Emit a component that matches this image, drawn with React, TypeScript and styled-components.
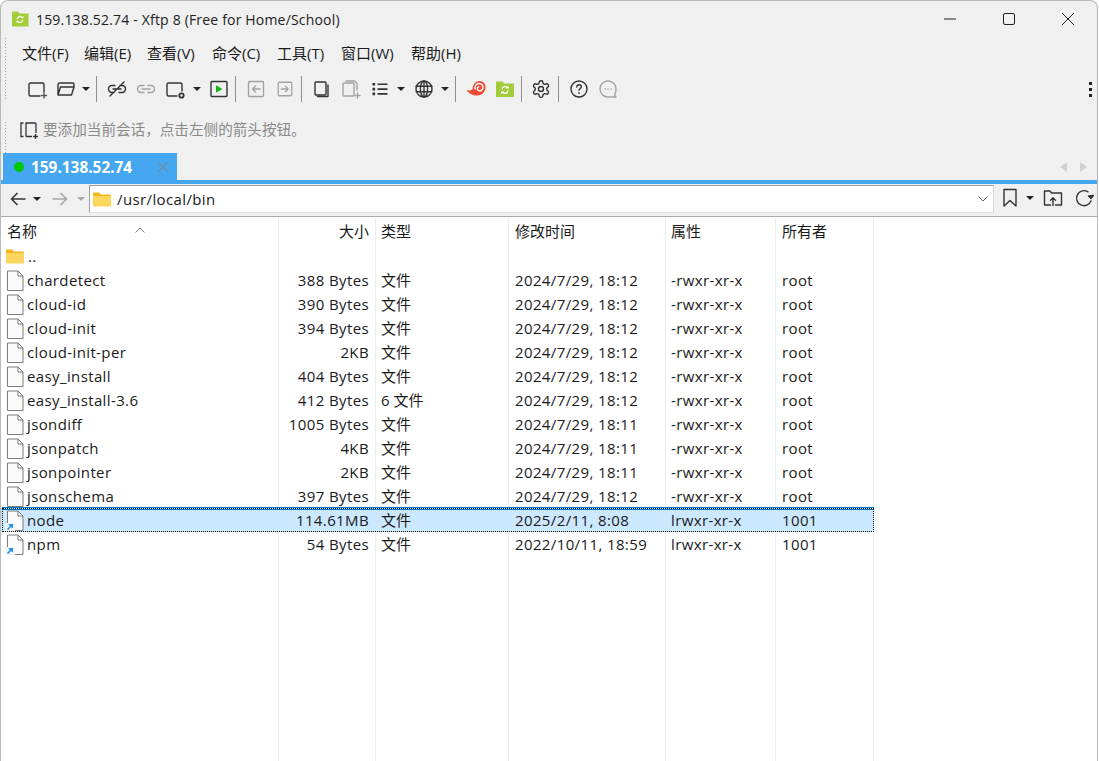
import React from "react";
import styled, { createGlobalStyle } from "styled-components";

const Global = createGlobalStyle`
  html, body { margin: 0; padding: 0; background: #fff; }
  body { width: 1099px; height: 761px; overflow: hidden; font-family: "Open Sans", "Noto Sans CJK SC", sans-serif; font-size: 15px; color: #1a1a1a; }
  * { box-sizing: border-box; }
`;

const Window = styled.div`
  width: 1098px; height: 761px; border: 1px solid #b9b9b9; border-bottom: none; border-radius: 8px 8px 0 0;
  overflow: hidden; display: flex; flex-direction: column; background: #f0f0f0;
`;
const TitleBar = styled.div`
  height: 36px; flex: none; display: flex; align-items: center; padding-left: 10px;
`;
const TitleText = styled.div`
  margin-left: 7px; font-size: 14px; letter-spacing: 0.18px; color: #222; white-space: nowrap; flex: 1;
`;
const WinButton = styled.div`
  width: 59px; height: 36px; display: flex; align-items: center; justify-content: center;
`;
const WinButtons = styled.div`
  display: flex;
`;
const Bars = styled.div`
  height: 116px; flex: none; padding-left: 21px; position: relative;
  background-image: radial-gradient(circle, #a9a9a9 0.9px, transparent 1px);
  background-size: 3px 3px; background-repeat: repeat-y; background-position: 3px 0;
`;
const GripGap = styled.div`
  position: absolute; left: 0; width: 18px; top: 63px; height: 20px; background: #f0f0f0;
`;
const Menu = styled.div`
  height: 34px; display: flex; align-items: center;
`;
const MenuItem = styled.div<{ $w: number }>`
  width: ${(p) => p.$w}px; font-size: 15px; white-space: nowrap; color: #1a1a1a; padding-bottom: 3px;
`;
const Toolbar = styled.div`
  height: 36px; display: flex; align-items: center; position: relative;
`;
const Tool = styled.div<{ $w: number }>`
  width: ${(p) => p.$w}px; height: 28px; flex: none; display: flex; align-items: center; justify-content: center;
`;
const Caret = styled.div<{ $muted?: boolean }>`
  width: 0; height: 0; border-left: 4px solid transparent; border-right: 4px solid transparent;
  border-top: 4px solid ${(p) => (p.$muted ? "#a6a6a6" : "#222")};
`;
const Separator = styled.div`
  width: 1px; height: 26px; background: #8f8f8f;
`;
const MoreDots = styled.div`
  position: absolute; right: 5px; top: 11px; display: flex; flex-direction: column; gap: 3px;
`;
const Dot = styled.span`
  width: 3px; height: 3px; background: #222; display: block;
`;
const Hint = styled.div`
  height: 46px; margin-left: -3px; display: flex; align-items: center; gap: 4px; color: #8a8a8a; font-size: 14.6px;
`;
const HintText = styled.span`
  padding-bottom: 3px;
`;
const TabRow = styled.div`
  height: 27px; flex: none; display: flex; padding-left: 2px; align-items: stretch;
`;
const Tab = styled.div`
  width: 174px; background: #45a7ef; display: flex; align-items: center; padding-left: 11px; color: #fff; font-weight: 700; font-size: 15.4px;
`;
const GreenDot = styled.span`
  width: 10px; height: 10px; border-radius: 50%; background: #00c800; margin-right: 7px;
`;
const TabLabel = styled.span`
  flex: 1; padding-top: 1px;
`;
const TabClose = styled.div`
  width: 28px; display: flex; justify-content: center;
`;
const TabNav = styled.div`
  margin-left: auto; display: flex; gap: 13px; align-items: center; padding-right: 10px;
`;
const Arrow = styled.div<{ $left?: boolean }>`
  width: 0; height: 0; border-top: 5px solid transparent; border-bottom: 5px solid transparent;
  ${(p) => (p.$left ? "border-right: 7px solid #d0d0d0;" : "border-left: 7px solid #d0d0d0;")}
`;
const BlueBar = styled.div`
  height: 4px; flex: none; background: #45a7ef;
`;
const AddressBar = styled.div`
  height: 33px; flex: none; display: flex; align-items: flex-start; border-bottom: 1px solid #a9a9a9;
`;
const NavGroup = styled.div`
  width: 88px; height: 29px; display: flex; align-items: center; flex: none; padding-left: 4px;
`;
const AddressInput = styled.div`
  width: 905px; height: 28px; margin-top: 1px; flex: none; background: #fff; border: 1px solid #a0a0a0; border-right-color: #d8d8d8; border-bottom-color: #e0e0e0;
  display: flex; align-items: center; padding-left: 3px; font-size: 15px; letter-spacing: 0.38px;
`;
const Path = styled.span`
  margin-left: 6px; flex: 1;
`;
const DropChevron = styled.div`
  width: 20px; display: flex; justify-content: center;
`;
const AddressTools = styled.div`
  display: flex; align-items: center; height: 28px;
`;
const List = styled.div`
  flex: 1; background: #fff; display: flex; flex-direction: column; padding-top: 1px; position: relative; min-height: 0;
`;
const COLS = "278px 97px 133px 157px 110px 98px 1fr";
const Header = styled.div`
  display: grid; grid-template-columns: ${COLS}; height: 26px; flex: none;
`;
const HeadCell = styled.div<{ $right?: boolean; $pad?: number }>`
  padding: 0 6px 2px ${(p) => p.$pad ?? 6}px; display: flex; align-items: center;
  justify-content: ${(p) => (p.$right ? "flex-end" : "flex-start")};
  border-right: 1px solid #e6eef6; font-size: 15px; color: #1a1a1a;
`;
const SortMark = styled.div`
  position: absolute; left: 134px; top: 0px;
`;
const Rows = styled.div`
  flex: 1; display: flex; flex-direction: column;
`;
const Row = styled.div`
  display: grid; grid-template-columns: ${COLS}; height: 24px; flex: none; position: relative;
`;
const FillRow = styled(Row)`
  flex: 1; height: auto;
`;
const Cell = styled.div<{ $right?: boolean; $pad?: number; $selected?: boolean }>`
  padding: 0 6px 0 ${(p) => p.$pad ?? 6}px; display: flex; align-items: center; white-space: nowrap; font-size: 15px; letter-spacing: 0.38px; color: #1a1a1a;
  justify-content: ${(p) => (p.$right ? "flex-end" : "flex-start")};
  border-right: 1px solid ${(p) => (p.$selected ? "transparent" : "#e6eef6")};
  background: ${(p) => (p.$selected ? "#cce8ff" : "transparent")};
`;
const TypeCell = styled(Cell)`
  padding-left: 5px; padding-bottom: 1px; letter-spacing: 0;
`;
const NameCell = styled(Cell)`
  padding-left: 4px; gap: 3px;
`;
const ParentCell = styled(Cell)`
  padding-left: 5px; gap: 4px;
`;
const SelectionFrame = styled.div`
  position: absolute; left: 1px; top: 0; width: 872px; height: 24px; border: 1px dotted #111; box-shadow: inset 0 1px 0 #0a78c8, 0 -1px 0 #0a78c8; pointer-events: none;
`;

const S = { fill: "none", stroke: "#333", strokeWidth: 1.4, strokeLinecap: "round", strokeLinejoin: "round" } as const;
const G = { ...S, stroke: "#a2a2a2" };

const I = {
  newSession: (
    <svg width="22" height="22" viewBox="0 0 22 22"><path {...S} d="M14 18H4.500A1.500 1.500 0 0 1 3 16.500V6.500A1.500 1.500 0 0 1 4.500 5h12A1.500 1.500 0 0 1 18 6.500V14" /><path {...S} stroke="#555" d="M18 15v5M15.500 17.500h5" /></svg>
  ),
  open: (
    <svg width="22" height="22" viewBox="0 0 22 22"><path {...S} d="M3 17V6.500A1.500 1.500 0 0 1 4.500 5h13A1.500 1.500 0 0 1 19 6.500V9H5.500L3 17h13.500L19 9" /></svg>
  ),
  broken: (
    <svg width="22" height="22" viewBox="0 0 22 22"><path {...S} d="M9 7.500H6a3.500 3.500 0 0 0 0 7h2M13 14.500h3a3.500 3.500 0 0 0 0-7h-2M7 11h8M4 18 18 4" /></svg>
  ),
  link: (
    <svg width="22" height="22" viewBox="0 0 22 22"><path {...G} d="M9 7.500H6a3.500 3.500 0 0 0 0 7h3M13 7.500h3a3.500 3.500 0 0 1 0 7h-3M7 11h8" /></svg>
  ),
  gearSession: (
    <svg width="22" height="22" viewBox="0 0 22 22"><path {...S} d="M13 18H4.500A1.500 1.500 0 0 1 3 16.500V6.500A1.500 1.500 0 0 1 4.500 5h12A1.500 1.500 0 0 1 18 6.500V13" /><circle cx="17.500" cy="17.500" r="2.200" fill="none" stroke="#333" strokeWidth="1.800" /></svg>
  ),
  play: (
    <svg width="20" height="20" viewBox="0 0 20 20"><rect {...S} x="2" y="2.500" width="16" height="15" rx="1" /><path d="M7 6.300v7.400l6.500-3.700z" fill="#12b312" /></svg>
  ),
  left: (
    <svg width="20" height="20" viewBox="0 0 20 20"><rect {...G} x="2.500" y="2.500" width="15" height="15" rx="1" /><path {...G} d="M14 10H6.500M9.500 7 6.500 10l3 3" /></svg>
  ),
  right: (
    <svg width="20" height="20" viewBox="0 0 20 20"><rect {...G} x="2.500" y="2.500" width="15" height="15" rx="1" /><path {...G} d="M6 10h7.500M10.500 7l3 3-3 3" /></svg>
  ),
  copy: (
    <svg width="20" height="20" viewBox="0 0 20 20"><rect {...S} x="4" y="3" width="11" height="13" rx="1" /><path {...S} d="M17 6v11.500H6.500" /></svg>
  ),
  paste: (
    <svg width="22" height="22" viewBox="0 0 22 22"><rect {...G} x="3" y="5" width="11" height="13" rx="1" /><path {...G} d="M6 3h8.500L17 5.500V12M17.500 15v5M15 17.500h5" /></svg>
  ),
  list: (
    <svg width="20" height="20" viewBox="0 0 20 20"><path d="M2.500 4h2.600v2.600H2.500zM2.500 8.800h2.600v2.600H2.500zM2.500 13.600h2.600v2.600H2.500z" fill="#333" /><path {...S} strokeLinecap="butt" strokeWidth="1.600" d="M7.500 5.300h10M7.500 10.100h10M7.500 14.900h10" /></svg>
  ),
  globe: (
    <svg width="20" height="20" viewBox="0 0 20 20"><circle {...S} cx="10" cy="10" r="8" /><ellipse {...S} cx="10" cy="10" rx="3.600" ry="8" /><path {...S} d="M10 2v16M2.200 7.300h15.600M2.200 12.700h15.600" /></svg>
  ),
  snail: (
    <svg width="22" height="22" viewBox="0 0 22 22"><path fill="#ee4b35" d="M1.500 12c3 .8 5 .5 6-1 .2-4 2.800-8 7-8 4 0 6.500 3.200 6 7-.5 4.500-4 7.500-8.500 7.500-4.200 0-8.500-2-10.500-5.500z" /><path fill="none" stroke="#fff" strokeWidth="1.400" d="M10 11.500c-.5-3.500 1.500-6 4.200-6 2.500 0 4.100 2 3.700 4.300-.3 2-2 3.300-3.600 3-1.400-.3-2.200-1.500-1.900-2.700.2-.9 1.100-1.500 1.900-1.200" /></svg>
  ),
  xftp: (
    <svg width="20" height="20" viewBox="0 0 20 20"><path fill="#a2cc3a" d="M1 2.500h6.500l1.500 2h10v13.500H1z" /><path fill="none" stroke="#fff" strokeWidth="1.400" d="M7 10.500a3 3 0 0 1 5.500-1.700M13 11.500a3 3 0 0 1-5.500 1.500" /><path fill="#fff" d="M10.800 9.500h3.200V7zM9.200 12.500H6V15z" /></svg>
  ),
  gear: (
    <svg width="20" height="20" viewBox="0 0 24 24"><path {...S} strokeWidth="1.700" d="M12.220 2h-.44a2 2 0 0 0-2 2v.18a2 2 0 0 1-1 1.730l-.43.250a2 2 0 0 1-2 0l-.15-.08a2 2 0 0 0-2.730.73l-.22.380a2 2 0 0 0 .73 2.730l.15.100a2 2 0 0 1 1 1.720v.510a2 2 0 0 1-1 1.740l-.15.090a2 2 0 0 0-.73 2.730l.22.380a2 2 0 0 0 2.730.73l.15-.08a2 2 0 0 1 2 0l.43.250a2 2 0 0 1 1 1.730V20a2 2 0 0 0 2 2h.44a2 2 0 0 0 2-2v-.18a2 2 0 0 1 1-1.730l.43-.250a2 2 0 0 1 2 0l.15.080a2 2 0 0 0 2.730-.73l.22-.390a2 2 0 0 0-.73-2.730l-.15-.080a2 2 0 0 1-1-1.740v-.500a2 2 0 0 1 1-1.740l.15-.090a2 2 0 0 0 .73-2.730l-.22-.380a2 2 0 0 0-2.730-.73l-.15.080a2 2 0 0 1-2 0l-.43-.250a2 2 0 0 1-1-1.730V4a2 2 0 0 0-2-2z" /><circle {...S} strokeWidth="1.700" cx="12" cy="12" r="3" /></svg>
  ),
  help: (
    <svg width="20" height="20" viewBox="0 0 20 20"><circle {...S} cx="10" cy="10" r="8" /><path {...S} d="M7.800 8c0-1.300 1-2.200 2.300-2.200s2.200.9 2.200 2c0 1.700-2.300 1.700-2.300 3.500" /><path d="M9.200 13.200h1.600v1.600H9.200z" fill="#333" /></svg>
  ),
  chat: (
    <svg width="20" height="20" viewBox="0 0 20 20"><path {...G} d="M18 10a8 8 0 1 0-8 8h8l-1.500-2.500A8 8 0 0 0 18 10z" /><path {...G} d="M7 10h.1M10 10h.1M13 10h.1" /></svg>
  ),
  back: (color: string) => (
    <svg width="18" height="18" viewBox="0 0 18 18"><path fill="none" stroke={color} strokeWidth="1.500" d="M16.500 9H2.500M8.500 3 2.500 9l6 6" /></svg>
  ),
  forward: (color: string) => (
    <svg width="18" height="18" viewBox="0 0 18 18"><path fill="none" stroke={color} strokeWidth="1.500" d="M1.500 9h14M9.500 3l6 6-6 6" /></svg>
  ),
  bookmark: (
    <svg width="18" height="20" viewBox="0 0 18 20"><path {...S} d="M3 1.500h12v16.500l-6-5.500-6 5.500z" /></svg>
  ),
  up: (
    <svg width="20" height="20" viewBox="0 0 20 20"><path {...S} d="M7.500 17H1.500V3h5.500l1.500 2h10v12H12.500M10 17.500V10M7.500 12.200 10 9.700l2.500 2.500" /></svg>
  ),
  refresh: (
    <svg width="20" height="20" viewBox="0 0 20 20"><path {...S} d="M14 3.800A7.500 7.500 0 1 0 17 13" /><path {...S} fill="#333" d="M14.500 8 17 10.500 19.500 7.500z" /></svg>
  ),
};

const FolderIcon = () => (
  <svg width="18" height="15" viewBox="0 0 18 15"><path fill="#f4b61a" d="M0 1.500A1 1 0 0 1 1 .5h5l2 2h9a1 1 0 0 1 1 1V5H0z" /><path fill="#fbd75f" d="M0 4h18v9.500a1 1 0 0 1-1 1H1a1 1 0 0 1-1-1z" /></svg>
);
const FileIcon = ({ link }: { link?: boolean }) => (
  <svg width="19" height="21" viewBox="0 0 19 21">
    <path fill="#fafafa" stroke="#7d7d7d" d="M2.500 1h10.500l5 5v14.500H2.500z" />
    <path fill="none" stroke="#7d7d7d" d="M13 1v5h5" />
    {link && <rect x="0" y="13" width="10" height="8" fill="#eef5fb" />}
    {link && <path fill="none" stroke="#1d8ee6" strokeWidth="1.500" d="M2.500 19.500 7 15M3.800 14.800h3.400V18" />}
  </svg>
);

const TitleIcon = () => (
  <svg width="18" height="18" viewBox="0 0 18 18"><path fill="#a2cc3a" d="M1 1.500h6l1.500 2H17.500v13H1z" /><path fill="none" stroke="#fff" strokeWidth="1.200" d="M6.300 9a2.700 2.700 0 0 1 5-1.200M11.700 10a2.700 2.700 0 0 1-5 1.200" /><path fill="#fff" d="M9.800 8.300h2.700V6zM8.200 10.700H5.500V13z" /></svg>
);

type FileRow = { name: string; size: string; type: string; date: string; attr: string; owner: string; link?: boolean; selected?: boolean };
const d12 = "2024/7/29, 18:12";
const d11 = "2024/7/29, 18:11";
const p = "-rwxr-xr-x";
const l = "lrwxr-xr-x";
const files: FileRow[] = [
  { name: "chardetect", size: "388 Bytes", type: "文件", date: d12, attr: p, owner: "root" },
  { name: "cloud-id", size: "390 Bytes", type: "文件", date: d12, attr: p, owner: "root" },
  { name: "cloud-init", size: "394 Bytes", type: "文件", date: d12, attr: p, owner: "root" },
  { name: "cloud-init-per", size: "2KB", type: "文件", date: d12, attr: p, owner: "root" },
  { name: "easy_install", size: "404 Bytes", type: "文件", date: d12, attr: p, owner: "root" },
  { name: "easy_install-3.6", size: "412 Bytes", type: "6 文件", date: d12, attr: p, owner: "root" },
  { name: "jsondiff", size: "1005 Bytes", type: "文件", date: d11, attr: p, owner: "root" },
  { name: "jsonpatch", size: "4KB", type: "文件", date: d11, attr: p, owner: "root" },
  { name: "jsonpointer", size: "2KB", type: "文件", date: d11, attr: p, owner: "root" },
  { name: "jsonschema", size: "397 Bytes", type: "文件", date: d12, attr: p, owner: "root" },
  { name: "node", size: "114.61MB", type: "文件", date: "2025/2/11, 8:08", attr: l, owner: "1001", link: true, selected: true },
  { name: "npm", size: "54 Bytes", type: "文件", date: "2022/10/11, 18:59", attr: l, owner: "1001", link: true },
];

const tools: { w: number; icon?: React.ReactNode; kind?: "caret" | "sep" }[] = [
  { w: 29, icon: I.newSession }, { w: 29, icon: I.open }, { w: 12, kind: "caret" }, { w: 9, kind: "sep" },
  { w: 32, icon: I.broken }, { w: 26, icon: I.link }, { w: 31, icon: I.gearSession }, { w: 13, kind: "caret" },
  { w: 32, icon: I.play }, { w: 1, kind: "sep" }, { w: 40, icon: I.left }, { w: 18, icon: I.right }, { w: 14, kind: "sep" },
  { w: 26, icon: I.copy }, { w: 34, icon: I.paste }, { w: 24, icon: I.list }, { w: 18, kind: "caret" },
  { w: 28, icon: I.globe }, { w: 14, kind: "caret" }, { w: 6, kind: "sep" }, { w: 36, icon: I.snail }, { w: 22, icon: I.xftp },
  { w: 10, kind: "sep" }, { w: 30, icon: I.gear }, { w: 5, kind: "sep" }, { w: 36, icon: I.help }, { w: 22, icon: I.chat },
];

const menus: [string, number][] = [["文件(F)", 62], ["编辑(E)", 63], ["查看(V)", 65], ["命令(C)", 65], ["工具(T)", 64], ["窗口(W)", 70], ["帮助(H)", 60]];

export default function App() {
  return (
    <>
      <Global />
      <Window>
        <TitleBar>
          <TitleIcon />
          <TitleText>159.138.52.74 - Xftp 8 (Free for Home/School)</TitleText>
          <WinButtons>
            <WinButton><svg width="12" height="12" viewBox="0 0 12 12"><path d="M0 6h12" stroke="#222" strokeWidth="1" /></svg></WinButton>
            <WinButton><svg width="12" height="12" viewBox="0 0 12 12"><rect x=".5" y=".5" width="11" height="11" rx="1.500" fill="none" stroke="#222" /></svg></WinButton>
            <WinButton><svg width="12" height="12" viewBox="0 0 12 12"><path d="M0 0l12 12M12 0 0 12" stroke="#222" strokeWidth="1" /></svg></WinButton>
          </WinButtons>
        </TitleBar>
        <Bars>
          <GripGap />
          <Menu>{menus.map(([m, w]) => <MenuItem key={m} $w={w}>{m}</MenuItem>)}</Menu>
          <Toolbar>
            {tools.map((t, i) => (
              <Tool key={i} $w={t.w}>{t.kind === "caret" ? <Caret /> : t.kind === "sep" ? <Separator /> : t.icon}</Tool>
            ))}
            <MoreDots><Dot /><Dot /><Dot /></MoreDots>
          </Toolbar>
          <Hint>
            <svg width="20" height="20" viewBox="0 0 20 20"><path fill="none" stroke="#333" strokeWidth="1.300" d="M4.500 3H2v13.500h2.500M7 16.500V3h9a1 1 0 0 1 1 1v9M7 16.500h6" /><path fill="none" stroke="#333" strokeWidth="1.300" d="M16.500 14v5M14 16.500h5" /></svg>
            <HintText>要添加当前会话，点击左侧的箭头按钮。</HintText>
          </Hint>
        </Bars>
        <TabRow>
          <Tab>
            <GreenDot />
            <TabLabel>159.138.52.74</TabLabel>
            <TabClose><svg width="10" height="10" viewBox="0 0 10 10"><path d="M0 0l10 10M10 0 0 10" stroke="#6f8ba2" strokeWidth="1.200" /></svg></TabClose>
          </Tab>
          <TabNav><Arrow $left /><Arrow /></TabNav>
        </TabRow>
        <BlueBar />
        <AddressBar>
          <NavGroup>
            <Tool $w={26}>{I.back("#333")}</Tool>
            <Tool $w={12}><Caret /></Tool>
            <Tool $w={34}>{I.forward("#a6a6a6")}</Tool>
            <Tool $w={8}><Caret $muted /></Tool>
          </NavGroup>
          <AddressInput>
            <FolderIcon />
            <Path>/usr/local/bin</Path>
            <DropChevron><svg width="10" height="6" viewBox="0 0 10 6"><path d="M.5.500 5 5 9.500.500" fill="none" stroke="#666" /></svg></DropChevron>
          </AddressInput>
          <AddressTools>
            <Tool $w={32}>{I.bookmark}</Tool>
            <Tool $w={8}><Caret /></Tool>
            <Tool $w={38}>{I.up}</Tool>
            <Tool $w={24}>{I.refresh}</Tool>
          </AddressTools>
        </AddressBar>
        <List>
          <SortMark><svg width="10" height="6" viewBox="0 0 10 6"><path d="M.5 5.500 5 1l4.500 4.500" fill="none" stroke="#777" /></svg></SortMark>
          <Header>
            <HeadCell>名称</HeadCell>
            <HeadCell $right>大小</HeadCell>
            <HeadCell $pad={5}>类型</HeadCell>
            <HeadCell>修改时间</HeadCell>
            <HeadCell $pad={5}>属性</HeadCell>
            <HeadCell>所有者</HeadCell>
          </Header>
          <Rows>
            <Row>
              <ParentCell><FolderIcon /><span>..</span></ParentCell>
              <Cell /><Cell /><Cell /><Cell /><Cell />
            </Row>
            {files.map((f) => (
              <Row key={f.name}>
                <NameCell $selected={f.selected}><FileIcon link={f.link} /><span>{f.name}</span></NameCell>
                <Cell $right $selected={f.selected}>{f.size}</Cell>
                <TypeCell $selected={f.selected}>{f.type}</TypeCell>
                <Cell $selected={f.selected}>{f.date}</Cell>
                <Cell $pad={5} $selected={f.selected}>{f.attr}</Cell>
                <Cell $selected={f.selected}>{f.owner}</Cell>
                {f.selected && <SelectionFrame />}
              </Row>
            ))}
            <FillRow>
              <Cell /><Cell /><Cell /><Cell /><Cell /><Cell />
            </FillRow>
          </Rows>
        </List>
      </Window>
    </>
  );
}
